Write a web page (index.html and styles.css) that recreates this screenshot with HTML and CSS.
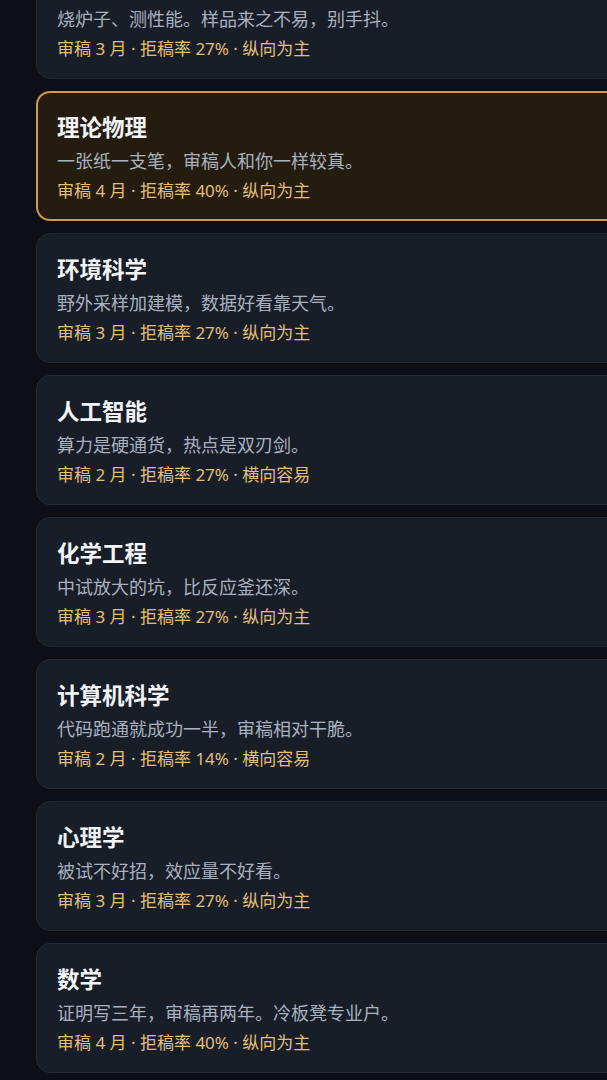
FILE: index.html
```html
<!DOCTYPE html>
<html lang="zh-CN">
<head>
<meta charset="utf-8">
<title>学科列表</title>
<link rel="stylesheet" href="styles.css">
</head>
<body>
<main class="page">
  <ul class="list">
    <li class="card">
      <h3 class="title">材料科学</h3>
      <p class="desc">烧炉子、测性能。样品来之不易，别手抖。</p>
      <p class="meta">审稿 3 月 · 拒稿率 27% · 纵向为主</p>
    </li>
    <li class="card active">
      <h3 class="title">理论物理</h3>
      <p class="desc">一张纸一支笔，审稿人和你一样较真。</p>
      <p class="meta">审稿 4 月 · 拒稿率 40% · 纵向为主</p>
    </li>
    <li class="card">
      <h3 class="title">环境科学</h3>
      <p class="desc">野外采样加建模，数据好看靠天气。</p>
      <p class="meta">审稿 3 月 · 拒稿率 27% · 纵向为主</p>
    </li>
    <li class="card">
      <h3 class="title">人工智能</h3>
      <p class="desc">算力是硬通货，热点是双刃剑。</p>
      <p class="meta">审稿 2 月 · 拒稿率 27% · 横向容易</p>
    </li>
    <li class="card">
      <h3 class="title">化学工程</h3>
      <p class="desc">中试放大的坑，比反应釜还深。</p>
      <p class="meta">审稿 3 月 · 拒稿率 27% · 纵向为主</p>
    </li>
    <li class="card">
      <h3 class="title">计算机科学</h3>
      <p class="desc">代码跑通就成功一半，审稿相对干脆。</p>
      <p class="meta">审稿 2 月 · 拒稿率 14% · 横向容易</p>
    </li>
    <li class="card">
      <h3 class="title">心理学</h3>
      <p class="desc">被试不好招，效应量不好看。</p>
      <p class="meta">审稿 3 月 · 拒稿率 27% · 纵向为主</p>
    </li>
    <li class="card">
      <h3 class="title">数学</h3>
      <p class="desc">证明写三年，审稿再两年。冷板凳专业户。</p>
      <p class="meta">审稿 4 月 · 拒稿率 40% · 纵向为主</p>
    </li>
  </ul>
</main>
</body>
</html>
```

FILE: styles.css
```css
html, body {
  margin: 0;
  padding: 0;
  background: #0c0f15;
  overflow: hidden;
}

body {
  font-family: "Noto Sans CJK SC", "Noto Sans", sans-serif;
  color: #e8ebf0;
}

.page {
  padding-left: 36px;
}

.list {
  list-style: none;
  margin: -51px -40px 0 0;
  padding: 0;
  display: flex;
  flex-direction: column;
  gap: 12px;
}

.card {
  background: #181e28;
  border: 1px solid #232a36;
  border-radius: 14px;
  padding: 19px 20px 16px;
}

.card.active {
  background: #251c10;
  border: 2px solid #cc9b47;
  padding: 18px 19px 15px;
}

.title {
  margin: 0;
  font-size: 22.5px;
  line-height: 30px;
  font-weight: 700;
  color: #f2f4f7;
}

.desc {
  margin: 5px 0 0;
  font-size: 18px;
  line-height: 28px;
  color: #a8b2bf;
}

.meta {
  margin: 4px 0 0;
  font-family: "Noto Sans", "Noto Sans CJK SC", sans-serif;
  font-size: 17px;
  line-height: 26px;
  color: #e4be76;
}
```
